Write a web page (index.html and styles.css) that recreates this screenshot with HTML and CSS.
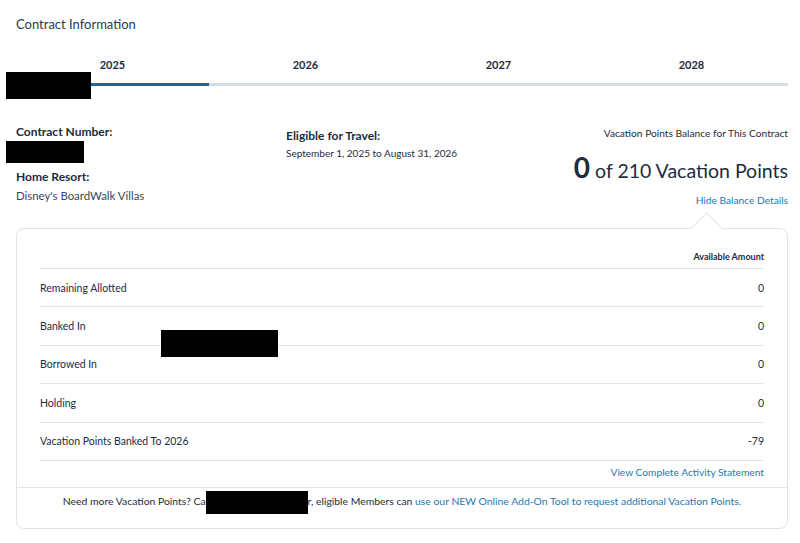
FILE: index.html
```html
<!DOCTYPE html>
<html lang="en">
<head>
    <meta charset="UTF-8">
    <title>Contract Information</title>
    <link rel="stylesheet" href="styles.css">
</head>
<body>

    <div class="page">
        <h2 class="page-title">Contract Information</h2>

        <!-- Use year tabs -->
        <div class="year-tabs">
            <div class="year-tab active">2025</div>
            <div class="year-tab">2026</div>
            <div class="year-tab">2027</div>
            <div class="year-tab">2028</div>
            <div class="redact redact_tabs"></div>
        </div>

        <div class="contract-info">
            <div class="info-col">
                <div class="info-label">Contract Number:</div>
                <div class="redact redact_number"></div>
                <div class="info-label info-label_spaced">Home Resort:</div>
                <div class="info-value">Disney's BoardWalk Villas</div>
            </div>
            <div class="info-col info-col_travel">
                <div class="info-label">Eligible for Travel:</div>
                <div class="info-date">September 1, 2025 to August 31, 2026</div>
            </div>
            <div class="info-col info-col_balance">
                <div class="balance-label">Vacation Points Balance for This Contract</div>
                <div class="balance-total"><span class="balance-num">0</span> of 210 Vacation Points</div>
                <a class="link balance-toggle" href="#">Hide Balance Details</a>
            </div>
        </div>

        <div class="balance-card">
            <div class="card-caret"></div>
            <div class="balance-table">
                <div class="table-head">Available Amount</div>
                <div class="table-row"><span>Remaining Allotted</span><span>0</span></div>
                <div class="table-row"><span>Banked In</span><span>0</span></div>
                <div class="table-row"><span>Borrowed In</span><span>0</span></div>
                <div class="table-row"><span>Holding</span><span>0</span></div>
                <div class="table-row"><span>Vacation Points Banked To 2026</span><span>-79</span></div>
                <div class="table-end">
                    <a class="link" href="#">View Complete Activity Statement</a>
                </div>
                <div class="redact redact_table"></div>
            </div>
            <div class="card-footer">
                Need more Vacation Points? Ca<span class="redact redact_footer"></span>r, eligible Members can
                <a class="link" href="#">use our NEW Online Add-On Tool to request additional Vacation Points.</a>
            </div>
        </div>
    </div>

</body>
</html>
```

FILE: styles.css
```css
body {
    margin: 0;
    font-family: Lato, "Open Sans", sans-serif;
    color: #1d2c40;
    background: #fff;
}
.page {
    width: 772px;
    padding: 14px 12px 0 16px;
}
.page-title {
    margin: 0;
    font-size: 13px;
    line-height: 20px;
    font-weight: normal;
    color: #2a3a50;
}
.year-tabs {
    position: relative;
    display: flex;
    margin-top: 23px;
}
.year-tab {
    flex: 1;
    text-align: center;
    font-size: 11px;
    font-weight: bold;
    line-height: 16px;
    padding-bottom: 10px;
    border-bottom: 3px solid #d3dde6;
}
.year-tab.active {
    border-bottom-color: #1769a6;
}
.redact {
    background: #000;
}
.redact_tabs {
    position: absolute;
    left: -10px;
    top: 15px;
    width: 85px;
    height: 27px;
}
.contract-info {
    display: flex;
    margin-top: 38px;
}
.info-col {
    flex: 0 0 270px;
}
.info-col_travel {
    padding-top: 4px;
    flex-basis: 240px;
}
.info-col_balance {
    flex: 1;
    text-align: right;
}
.info-label {
    font-size: 12px;
    font-weight: bold;
    line-height: 16px;
}
.info-label_spaced {
    margin-top: 6px;
}
.redact_number {
    width: 78px;
    height: 22px;
    margin: 1px 0 0 -10px;
}
.info-value {
    margin-top: 3px;
    font-size: 11.4px;
    line-height: 16px;
    color: #3b4657;
}
.info-date {
    margin-top: 2px;
    font-size: 10px;
    line-height: 14px;
}
.balance-label {
    font-size: 10.2px;
    line-height: 14px;
    margin-top: 2px;
}
.balance-total {
    margin-top: 12px;
    font-size: 19.5px;
    line-height: 30px;
    color: #1d2c40;
}
.balance-num {
    font-size: 28px;
    font-weight: bold;
}
.link {
    color: #2678ad;
    text-decoration: none;
}
.balance-toggle {
    display: block;
    margin-top: 7px;
    font-size: 10.2px;
    line-height: 14px;
}
.balance-card {
    position: relative;
    margin-top: 21px;
    border: 1px solid #e1e3e6;
    border-radius: 8px;
    background: #fff;
}
.card-caret {
    position: absolute;
    right: 69px;
    top: -12px;
    width: 22px;
    height: 22px;
    background: #fff;
    border-top: 1px solid #e1e3e6;
    border-left: 1px solid #e1e3e6;
    transform: rotate(45deg);
}
.balance-table {
    position: relative;
    padding: 22px 23px 0 23px;
}
.table-head {
    text-align: right;
    font-size: 9px;
    font-weight: bold;
    line-height: 12px;
    padding-bottom: 5px;
}
.table-row {
    display: flex;
    justify-content: space-between;
    align-items: center;
    box-sizing: border-box;
    height: 38.4px;
    border-top: 1px solid #e2e4e6;
    font-size: 10.5px;
}
.table-end {
    border-top: 1px solid #e2e4e6;
    text-align: right;
    font-size: 10.2px;
    line-height: 14px;
    padding: 4px 0 8px;
}
.redact_table {
    position: absolute;
    left: 144px;
    top: 101px;
    width: 117px;
    height: 27px;
}
.card-footer {
    border-top: 1px solid #e2e4e6;
    text-align: center;
    font-size: 10.4px;
    line-height: 14px;
    padding: 3px 0 14px;
}
.redact_footer {
    display: inline-block;
    width: 102px;
    height: 23px;
    vertical-align: middle;
}
```
